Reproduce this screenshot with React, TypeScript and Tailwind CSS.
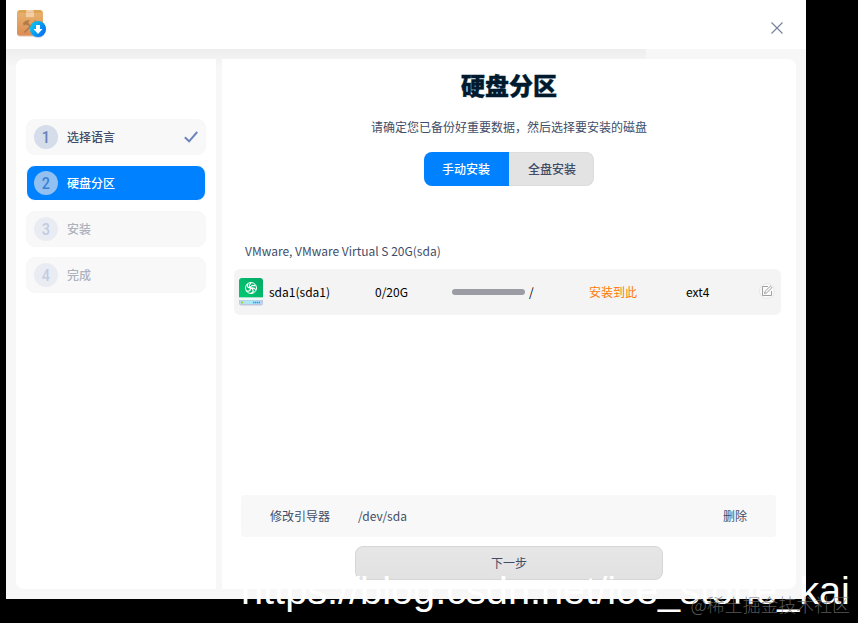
import { useState } from 'react'
import clsx from 'clsx'

const steps = ['选择语言', '硬盘分区', '安装', '完成']
const CURRENT = 1

function InstallerIcon() {
  return (
    <svg width="32" height="32" viewBox="0 0 32 32" aria-hidden>
      <defs>
        <linearGradient id="box" x1="0" y1="0" x2="0" y2="1">
          <stop offset="0" stopColor="#e9b56f" />
          <stop offset="1" stopColor="#dc8d55" />
        </linearGradient>
        <linearGradient id="badge" x1="0" y1="0" x2="1" y2="0.6">
          <stop offset="0" stopColor="#08d3f4" />
          <stop offset="1" stopColor="#0672f2" />
        </linearGradient>
      </defs>
      <rect x="1" y="2" width="26" height="25.5" rx="3" fill="#c9a084" opacity="0.6" />
      <rect x="1" y="1" width="26" height="25.5" rx="3" fill="url(#box)" />
      <path d="M3.5 1h21L26 4H2z" fill="#dda553" />
      <path d="M10.500 1h6.500l1 2.500v5l-1-.8-1.100.8-1.200-.8-1.200.8-1.200-.8-1.200.8-1.100-.8V3.500z" fill="#f2cfa8" />
      <path d="M10 3.500h8" stroke="#e7b987" strokeWidth="0.8" />
      <path d="M7 14.500c1.500-2.600 4-3.600 7-3l-2 2 1 1-2 2-1.300-1.200-1.700 1.700z" fill="#b07a49" />
      <path d="M11.500 14.500l8 8M17.500 14L8.500 23.500" stroke="#b07a49" strokeWidth="1.700" />
      <path d="M17 14.500l3-3M18.500 16l3-2" stroke="#b07a49" strokeWidth="1.300" />
      <circle cx="22" cy="21" r="8" fill="#8fa9bf" opacity="0.5" />
      <circle cx="22" cy="20" r="8" fill="url(#badge)" />
      <path d="M20 16h4v4h2.500L22 25l-4.500-5H20z" fill="#fff" />
    </svg>
  )
}

function DiskIcon() {
  return (
    <svg width="24" height="28" viewBox="0 0 24 28" aria-hidden>
      <defs>
        <linearGradient id="disk" x1="0" y1="1" x2="1" y2="0">
          <stop offset="0" stopColor="#00ca70" />
          <stop offset="1" stopColor="#04a968" />
        </linearGradient>
        <linearGradient id="strip">
          <stop offset="0" stopColor="#c3d8e8" />
          <stop offset="0.5" stopColor="#a5ecfb" />
          <stop offset="1" stopColor="#b9d3f2" />
        </linearGradient>
      </defs>
      <rect y="14" width="24" height="13.500" rx="2.500" fill="#bfc5dc" />
      <path d="M3 0h18a3 3 0 0 1 3 3v16.500H0V3a3 3 0 0 1 3-3z" fill="url(#disk)" />
      <path d="M0 19.500h24V22H0z" fill="#eefaf5" />
      <path d="M.8 22.500h22.400V26H.8z" fill="url(#strip)" />
      <rect x="2" y="23.500" width="2" height="2" rx="1" fill="#7fe000" />
      <path d="M14 24.500h7" stroke="#1e9bf5" strokeWidth="1.300" strokeDasharray="1.300 0.600" />
      <circle cx="12" cy="10" r="5.500" fill="none" stroke="#fff" strokeWidth="1" />
      <path
        d="M7 12.500c2 1.500 4.500.5 4.500-2S13 6.500 16.500 8M9 5.500c-1.500 3 0 4.500 2.500 4.500M12 5c-2 1.500-2 3-.5 5M17 12c-2-2.500-3.500-2.500-5.500-1.500M11 15.500c3.500-.5 4-2.500 2-5"
        fill="none"
        stroke="#fff"
        strokeWidth="1.200"
      />
    </svg>
  )
}

function EditIcon() {
  return (
    <svg width="16" height="16" viewBox="0 0 16 16" fill="none" aria-hidden>
      <circle cx="8" cy="8" r="7.500" fill="#fafafa" stroke="#e6e6e6" />
      <path d="M9 3.500H3.500v9h9V8" stroke="#a0a0a0" />
      <path d="M5.500 10.500l.6-2.200 5.200-5.100 1.600 1.500-5.200 5.200z" stroke="#a0a0a0" />
    </svg>
  )
}

function Step({ index, label }: { index: number; label: string }) {
  const active = index === CURRENT
  const done = index < CURRENT
  return (
    <li
      className={clsx(
        'flex items-center h-9 px-2 rounded-[9px] border font-medium',
        active ? 'bg-[#0081ff] border-white text-white' : 'bg-[#f8f8f8] border-[#f7f7f7]',
        done && 'text-[#414d68]',
        !active && !done && 'text-[#adb2bd]',
      )}
    >
      <span
        className={clsx(
          "-ml-px flex size-6 items-center justify-center rounded-full font-['Roboto',sans-serif] text-[17px] leading-none font-medium",
          active && 'bg-[#92c1f1] text-[#3c7ed6]',
          done && 'bg-[#d5dcea] text-[#6880b8]',
          !active && !done && 'bg-[#eaecf3] text-[#c2cbe2]',
        )}
      >
        <span className="scale-x-[.85]">{index + 1}</span>
      </span>
      <span className="ml-[9px] flex-1">{label}</span>
      {done && (
        <svg width="14" height="12" viewBox="0 0 14 12" className="-mr-px" fill="none" aria-hidden>
          <path d="M.8 6.300l4.300 4L13.200 1" stroke="#6c86bd" strokeWidth="2" />
        </svg>
      )}
    </li>
  )
}

export default function App() {
  const [mode, setMode] = useState<'manual' | 'full'>('manual')

  return (
    <div className="relative h-[623px] w-[858px] overflow-hidden bg-black pl-1.5 font-['Noto_Sans_CJK_SC',sans-serif] text-xs text-[#414d68]">
      <div className="flex h-[599px] w-[800px] flex-col bg-[#f7f7f7]">
        <header className="flex h-[49px] shrink-0 items-start justify-between bg-white pl-2.5 pr-[23px] pt-[9px]">
          <InstallerIcon />
          <button aria-label="关闭" className="mt-[13px]">
            <svg width="12" height="12" viewBox="0 0 12 12" aria-hidden>
              <path d="M.5.500l11 11M11.500.500l-11 11" stroke="#737f9c" strokeWidth="1.100" />
            </svg>
          </button>
        </header>
        <div className="flex min-h-0 flex-1 gap-1.5 bg-[linear-gradient(#eeeeee,#f7f7f7)] bg-[length:640px_18px] bg-no-repeat p-2.5">
          <aside className="w-[200px] rounded-l-lg bg-white px-2.5 pt-[60px]">
            <ol className="flex flex-col gap-2.5">
              {steps.map((label, i) => (
                <Step key={label} index={i} label={label} />
              ))}
            </ol>
          </aside>

          <main className="flex flex-1 flex-col rounded-r-lg bg-white">
            <h1 className="mt-2 text-center text-2xl leading-9 font-black text-[#001a2e] [-webkit-text-stroke:0.4px_#001a2e]">
              硬盘分区
            </h1>
            <p className="mt-[14px] text-center leading-5">请确定您已备份好重要数据，然后选择要安装的磁盘</p>

            <div className="mx-auto mt-[15px] flex h-[34px] w-[170px] overflow-hidden rounded-lg bg-[#e3e3e3] font-medium">
              <button
                onClick={() => setMode('manual')}
                className={clsx(
                  'w-[85px] pr-px',
                  mode === 'manual' ? 'bg-[#0081ff] text-white' : 'border border-[#d9d9d9]',
                )}
              >
                手动安装
              </button>
              <button
                onClick={() => setMode('full')}
                className={clsx(
                  'w-[85px] rounded-r-lg pl-0.5',
                  mode === 'full' ? 'bg-[#0081ff] text-white' : 'border border-l-0 border-[#dcdcdc]',
                )}
              >
                全盘安装
              </button>
            </div>

            <p className="mt-[55px] ml-[23px] leading-5">VMware, VMware Virtual S 20G(sda)</p>
            <div className="mt-2 ml-3 flex h-[46px] w-[547px] items-center rounded-md bg-[#f4f4f4] pl-[5px] text-black">
              <DiskIcon />
              <span className="ml-1.5 w-[106px]">sda1(sda1)</span>
              <span className="w-[77px]">0/20G</span>
              <span className="h-1.5 w-[73px] rounded-full bg-[#9c9ca4]" />
              <span className="ml-1 w-[60px]">/</span>
              <span className="w-[97px] text-[#ff7a05]">安装到此</span>
              <span className="w-[73px]">ext4</span>
              <button aria-label="编辑" className="-mt-0.5">
                <EditIcon />
              </button>
            </div>

            <div className="mt-[180px] ml-[19px] flex h-[42px] w-[535px] items-center rounded bg-[#f8f8f8] px-[29px]">
              <span className="w-[88px]">修改引导器</span>
              <span className="flex-1">/dev/sda</span>
              <button>删除</button>
            </div>
            <button className="mt-[9px] ml-[133px] h-[34px] w-[308px] rounded-lg border border-[#d6d6d6] bg-linear-to-b from-[#e6e6e6] to-[#e2e2e2]">
              下一步
            </button>
          </main>
        </div>
      </div>

      <span className="absolute top-[566px] left-[241px] font-['Liberation_Sans',sans-serif] text-[39.7px] leading-[48px] whitespace-nowrap text-white">
        https://blog.csdn.net/ice_stone_kai
      </span>
      <span className="absolute right-2 bottom-[7px] text-[17.9px] leading-6 font-light whitespace-nowrap text-[#777]/75">
        @稀土掘金技术社区
      </span>
    </div>
  )
}
